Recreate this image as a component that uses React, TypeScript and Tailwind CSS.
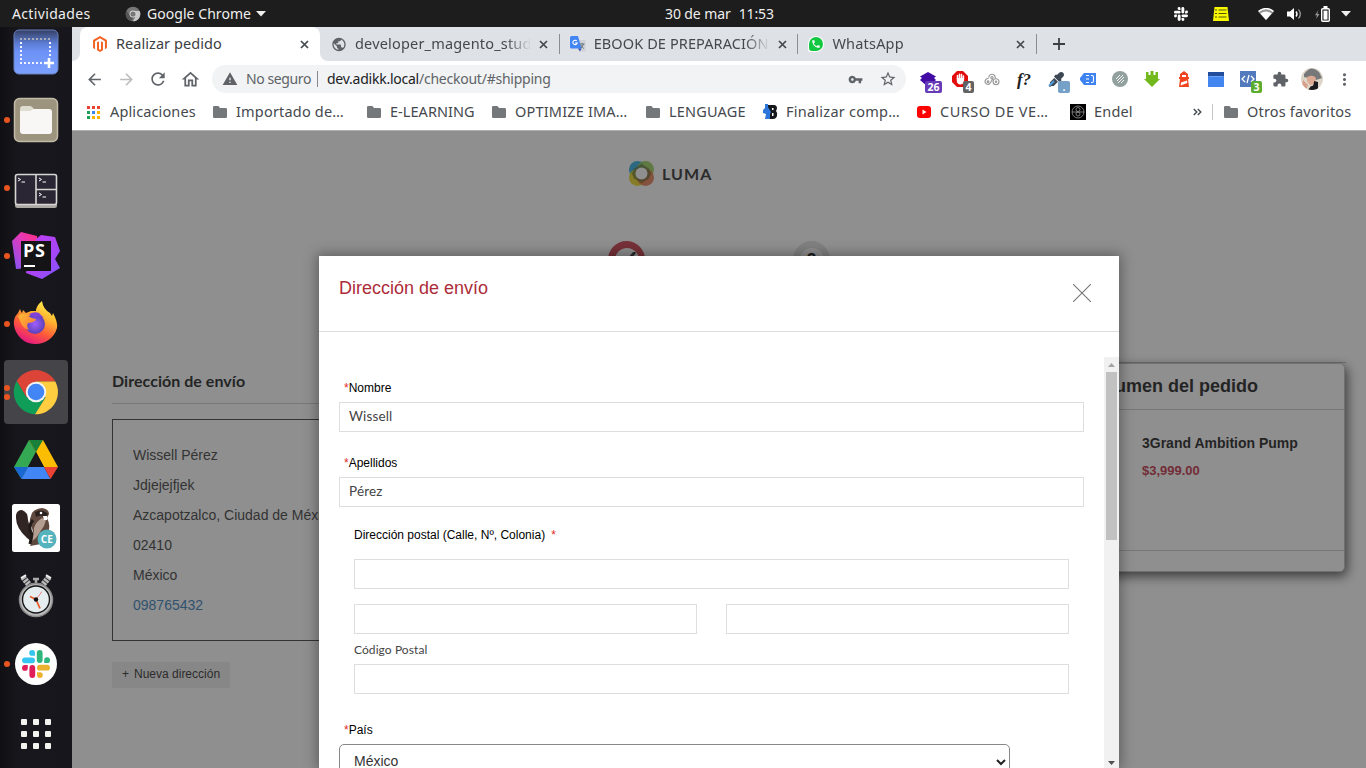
import React from "react";
import type { ReactNode } from "react";
import { FaMagento, FaEyeDropper } from "react-icons/fa";
import { MdArrowBack, MdArrowForward, MdRefresh, MdOutlineHome, MdWarning, MdVpnKey, MdStarBorder, MdPhone, MdPublic, MdMoreVert, MdExtension } from "react-icons/md";

const SLACK_WHITE = ["#fff", "#fff", "#fff", "#fff"];
const SLACK_COLORS = ["#36c5f0", "#2eb67d", "#e01e5a", "#ecb22e"];

function SlackMark({ size, colors }: { size: number; colors: string[] }) {
  const [a, b, c, d] = colors;
  return (
    <svg width={size} height={size} viewBox="0 0 28 28">
      <rect x="0" y="7.4" width="13" height="5.8" rx="2.9" fill={a} />
      <path d="M13 5.8H10.2A2.9 2.9 0 1 1 13 2.9Z" fill={a} />
      <rect x="14.8" y="0" width="5.8" height="13" rx="2.9" fill={b} />
      <path d="M22.2 13V10.2A2.9 2.9 0 1 1 25.1 13Z" fill={b} />
      <rect x="7.4" y="15" width="5.8" height="13" rx="2.9" fill={c} />
      <path d="M5.8 15V17.9A2.9 2.9 0 1 1 2.9 15Z" fill={c} />
      <rect x="15" y="14.8" width="13" height="5.8" rx="2.9" fill={d} />
      <path d="M15 22.2H17.9A2.9 2.9 0 1 1 15 25.1Z" fill={d} />
    </svg>
  );
}

function TopBar() {
  return (
    <header className="flex h-[27px] shrink-0 items-center bg-[#1d1d1d] font-['Noto_Sans',sans-serif] text-[14px] text-[#f0efee]">
      <span className="w-[125px] pl-3 tracking-[0.35px]">Actividades</span>
      <svg width="16" height="16" viewBox="0 0 16 16">
        <circle cx="8" cy="8" r="7.3" fill="#777" />
        <path d="M8 5H14.7A7.3 7.3 0 0 1 8 15.3L11 9.5Z" fill="#c8c8c8" />
        <path d="M1.5 4.6 5.4 10 8 11 6.5 15A7.3 7.3 0 0 1 1.5 4.6Z" fill="#555" />
        <circle cx="8" cy="8" r="3.5" fill="#d8d8d8" />
        <circle cx="8" cy="8" r="2.6" fill="#777" />
      </svg>
      <span className="w-[110px] whitespace-nowrap pl-1.5 tracking-[0.05px]">Google Chrome</span>
      <svg width="10" height="6" viewBox="0 0 10 6" className="ml-[5px]"><path d="M0 0H10L5 5.5Z" fill="#f0efee" /></svg>
      <span className="ml-[399px] flex w-[112px] gap-2 whitespace-nowrap tracking-[-0.1px]"><span>30 de mar</span><span>11:53</span></span>
      <div className="ml-auto flex items-center pr-[15px]">
        <SlackMark size={14} colors={SLACK_WHITE} />
        <svg className="ml-[25px]" width="16" height="14" viewBox="0 0 16 14">
          <path d="M1.5 0h13L16 14H0Z" fill="#f7f700" />
          <path d="M2 3h2M5.500 3h8M2 6.500h2M5.500 6.500h8M2 10h2M5.500 10h8" stroke="#55550a" strokeWidth="1.200" />
        </svg>
        <svg className="ml-[29px]" width="16" height="12" viewBox="0 0 16 12">
          <path d="M0 3.500Q8-3 16 3.500L8 12Z" fill="#999" />
          <path d="M2.300 5.600Q8 1.500 13.700 5.600L8 12Z" fill="#fff" />
          <path d="M.6 3.400Q8-2.300 15.400 3.400" stroke="#fff" strokeWidth="1.400" fill="none" />
        </svg>
        <svg className="ml-[13px]" width="16" height="14" viewBox="0 0 16 14" fill="none" stroke="#fff">
          <path d="M0 4.500h3L7 1v12L3 9.500H0Z" fill="#fff" stroke="none" />
          <path d="M9 4.500q2 2.500 0 5" strokeWidth="1.400" /><path d="M11.500 2.500q3.600 4.500 0 9" stroke="#aaa" strokeWidth="1.200" />
        </svg>
        <svg className="ml-[12px]" width="16" height="16" viewBox="0 0 16 16">
          <path d="M3.500 4 0 9.300h2L1 13l3.500-5H2.300Z" fill="#999" />
          <rect x="6.700" y="2.700" width="7.600" height="12.600" rx="1" fill="none" stroke="#fff" strokeWidth="1.400" />
          <rect x="8.500" y="4.600" width="4" height="9" fill="#fff" /><rect x="8.500" y="0" width="4" height="2.500" fill="#fff" />
        </svg>
        <svg className="ml-[10px]" width="10" height="6" viewBox="0 0 10 6"><path d="M0 0H10L5 5.500Z" fill="#f0efee" /></svg>
      </div>
    </header>
  );
}

function DockItem({ dots = 0, active = false, children }: { dots?: number; active?: boolean; children: ReactNode }) {
  return (
    <div className="flex h-16 shrink-0 items-center">
      <div className={active ? "ml-1 flex h-16 w-16 items-center rounded bg-[#454449]" : "ml-1 flex h-16 w-16 items-center"}>
        <div className="flex w-[6px] flex-col gap-[3px]">
          {Array.from({ length: dots }, (_, i) => <i key={i} className="h-[6px] w-[6px] rounded-full bg-[#e95420]" />)}
        </div>
        <div className="ml-[2px] flex w-12 justify-center">{children}</div>
      </div>
    </div>
  );
}

function Dock() {
  return (
    <nav className="flex w-[72px] shrink-0 flex-col overflow-hidden bg-[linear-gradient(90deg,#101014,#18171d_30%,#17161c)]">
      <div className="-mt-[7px] flex flex-col gap-1">
        <DockItem>
          <svg width="46" height="46" viewBox="0 0 46 46">
            <defs><linearGradient id="shot" x2="0" y2="1"><stop stopColor="#343e62" /><stop offset=".3" stopColor="#5c7cd2" /><stop offset=".5" stopColor="#6e93f8" /><stop offset="1" stopColor="#7ba0ff" /></linearGradient></defs>
            <rect x="1" y="1" width="44" height="44" rx="5" fill="url(#shot)" stroke="#6880c0" />
            <path d="M7 10h31" stroke="#a9adb8" strokeWidth="2" strokeDasharray="2 2" />
            <path d="M8 13v22M7 34h24M37 13v14" stroke="#f2f5ff" strokeWidth="2" strokeDasharray="2 2" />
            <path d="M36 29v10M31 34h10" stroke="#fff" strokeWidth="2.600" />
          </svg>
        </DockItem>
        <DockItem dots={1}>
          <svg width="46" height="46" viewBox="0 0 46 46">
            <rect x="1.500" y="1.500" width="43" height="43" rx="5" fill="#9c947f" stroke="#c1baa7" strokeWidth="1.500" />
            <path d="M7 12q0-3 3-3h7q2 0 4 3h15v18H7Z" fill="#dedbcf" />
            <path d="M7 14h10l4-2h15q3 0 3 3v19q0 3-3 3H10q-3 0-3-3Z" fill="#f8f7f5" />
          </svg>
        </DockItem>
        <DockItem dots={1}>
          <svg width="44" height="36" viewBox="0 0 44 36" className="mt-[5px]">
            <rect x="1" y="1" width="42" height="34" rx="2.500" fill="#aba8a4" />
            <rect x="1.500" y="1.500" width="41" height="30" rx="2" fill="#2b2634" stroke="#d8d6d3" strokeWidth="1.600" />
            <path d="M22 1v30M22 16.500h21" stroke="#d8d6d3" strokeWidth="1.600" />
            <path d="m4 5 2.500 1.500L4 8M7.500 9H11M25 5l2.500 1.500L25 8M28.500 9H32M25 20l2.500 1.500L25 23M28.500 24H32" stroke="#fff" fill="none" />
          </svg>
        </DockItem>
        <DockItem dots={1}>
          <svg width="48" height="48" viewBox="0 0 48 48" className="overflow-visible">
            <defs>
              <linearGradient id="psa" x1="1" x2="0" y2="1"><stop stopColor="#ff3180" /><stop offset=".4" stopColor="#e638b7" /><stop offset="1" stopColor="#7b58fa" /></linearGradient>
              <linearGradient id="psb" x2="1" y2="1"><stop stopColor="#c93df2" /><stop offset=".6" stopColor="#a646f7" /><stop offset="1" stopColor="#7b58ff" /></linearGradient>
            </defs>
            <path d="M0 9 9 0l16 4v10L17 36 4 37Z" fill="url(#psa)" />
            <path d="m24 7 5-4 14 2 5 14-5 8 5 9-18 11-16-6 1-7Z" fill="url(#psb)" />
            <rect x="9" y="9" width="30" height="30" fill="#141416" />
            <text x="11" y="25" fill="#fff" fontFamily="Open Sans, sans-serif" fontWeight="700" fontSize="18" textLength="22">PS</text>
            <path d="M12 34h11" stroke="#fff" strokeWidth="2" />
          </svg>
        </DockItem>
        <DockItem dots={1}>
          <svg width="46" height="46" viewBox="0 0 46 46" className="overflow-visible">
            <defs>
              <linearGradient id="ffa" x1=".8" y1="0" x2=".3" y2="1"><stop stopColor="#fff44f" /><stop offset=".35" stopColor="#ffb52f" /><stop offset=".65" stopColor="#ff5b39" /><stop offset="1" stopColor="#e31587" /></linearGradient>
              <radialGradient id="ffb"><stop stopColor="#9f5fff" /><stop offset="1" stopColor="#5b40b8" /></radialGradient>
              <linearGradient id="ffc" x2="1" y2="1"><stop stopColor="#ffbd35" /><stop offset="1" stopColor="#ff7139" /></linearGradient>
            </defs>
            <path d="M5 12 7 8q1 3 2 4l1-3q2 2 3 3l5-2 5 0q0-5 6-10 1 8 8 12l2 3 1-3q5 9 4 15A22 22 0 0 1 1 24Q0 17 5 12Z" fill="url(#ffa)" />
            <circle cx="22" cy="23" r="10" fill="url(#ffb)" />
            <path d="M5 15q6-4 9-1 3 3 9 4 0 3-8 4-2 3 1 7-7-2-9-9Z" fill="url(#ffc)" />
            <path d="M16 13q6-3 10-1l5 5q-6-3-10-1Z" fill="#8042d8" />
          </svg>
        </DockItem>
        <DockItem dots={2} active>
          <svg width="46" height="46" viewBox="0 0 46 46">
            <path d="M3.700 12A22.300 22.300 0 0 1 42.300 12.500H23L13.500 28.500Z" fill="#db4437" />
            <path d="M3.700 12A22.300 22.300 0 0 0 22 45.300L32.500 28.500H13.500Z" fill="#0f9d58" />
            <path d="M23 12.500h19.300A22.300 22.300 0 0 1 22 45.300l10.500-16.800Z" fill="#ffcd40" />
            <circle cx="23" cy="23" r="10.300" fill="#f3f3f3" /><circle cx="23" cy="23" r="8.300" fill="#4285f4" />
          </svg>
        </DockItem>
        <DockItem>
          <svg width="44" height="40" viewBox="0 0 44 40">
            <path d="m15 0 7 12L7.500 39 0 27Z" fill="#34a853" />
            <path d="M29 0 15 0 22 12 30 27H44Z" fill="#fbbc04" /><path d="M15 0h14l-7 12Z" fill="#188038" />
            <path d="M0 27h14L7.500 39Z" fill="#1967d2" /><path d="M14 27h16l6.500 12h-29Z" fill="#4285f4" /><path d="M30 27h14l-7.500 12Z" fill="#ea4335" />
            <path d="m22 12 8 15H14Z" fill="#17161c" />
          </svg>
        </DockItem>
        <DockItem>
          <svg width="48" height="48" viewBox="0 0 48 48">
            <rect width="48" height="48" rx="2.500" fill="#fff" />
            <path d="M4 11q1-5 6-5 6 2 6 10l3 12q1 6 5 8-4 3-9-2Q4 24 4 14Z" fill="#302522" />
            <path d="M19 12q1-7 11-8 7 1 7 6l-2 4q4 8 1 14l-7 12-11 2 4-10-2-8q-4-6-1-12Z" fill="#5f493e" />
            <path d="M23 8q7-4 13 2l-3 3q-4-3-9 0Z" fill="#29211e" />
            <path d="M30 14l4 2-2 6-8 12-4 3 2-10q-1-7 8-13Z" fill="#b49e91" />
            <path d="M21 16q-6 7-1 14l-2 10" stroke="#211a18" strokeWidth="3" fill="none" />
            <path d="M31 12h4v4h-3Z" fill="#fff" /><circle cx="29" cy="9" r="1.300" fill="#fff" />
            <circle cx="35" cy="35" r="9.500" fill="#54b3bc" />
            <text x="28.800" y="38.800" fill="#fff" fontFamily="Open Sans, sans-serif" fontWeight="700" fontSize="10" textLength="12">CE</text>
          </svg>
        </DockItem>
        <DockItem>
          <svg width="38" height="46" viewBox="0 0 38 46">
            <path d="m6 4 7 9M32 4l-7 9" stroke="#b8b8b8" strokeWidth="6" strokeDasharray="2.500 .8" /><path d="m4 5 5-3M29 2l5 3" stroke="#eee" strokeWidth="2" />
            <path d="M16 6h6M19 5v7" stroke="#aaa" strokeWidth="2.500" />
            <circle cx="19" cy="27" r="16.500" fill="#bbb" stroke="#8a8a8a" strokeWidth="1.500" />
            <circle cx="19" cy="26.500" r="13.500" fill="#e5edef" stroke="#181818" strokeWidth="1.400" />
            <path d="m19 26.500 6-8" stroke="#f08080" /><path d="m19 26.500 4 9M19 26.500l-6-3" stroke="#ed5a2a" strokeWidth="1.800" />
            <circle cx="19" cy="26.500" r="2.200" fill="#111" />
          </svg>
        </DockItem>
        <DockItem dots={1}>
          <div className="flex h-[42px] w-[42px] items-center justify-center rounded-full bg-white"><SlackMark size={28} colors={SLACK_COLORS} /></div>
        </DockItem>
      </div>
      <div className="mt-[23px] ml-[21px] grid w-[30px] grid-cols-3 gap-[6px]">
        {Array.from({ length: 9 }, (_, i) => <i key={i} className="h-[6px] w-[6px] rounded-[1px] bg-[#f3f3ef]" />)}
      </div>
    </nav>
  );
}

function CloseX() {
  return <svg width="9" height="9" viewBox="0 0 9 9" className="shrink-0"><path d="m1 1 7 7M8 1 1 8" stroke="#45494d" strokeWidth="1.700" /></svg>;
}

function TranslateIcon() {
  return (
    <svg width="16" height="16" viewBox="0 0 16 16">
      <path d="M6 4h9.500v11.500H9Z" fill="#cfd2d6" /><path d="M1.500 0H8l3.500 12.500h-10Q0 12.500 0 11V1.500Q0 0 1.500 0Z" fill="#4285f4" /><path d="M8 12.500h3.500L10 15.500Z" fill="#3450c0" />
      <path d="M6.800 5a2.200 2.200 0 1 0 .4 2H5" stroke="#fff" strokeWidth="1.100" fill="none" /><path d="M9.500 8H14.500M12 7v1M13.500 8q-1 3-3 4.500M10.800 9q1 2 3 3.500" stroke="#667481" fill="none" />
    </svg>
  );
}

function WhatsappIcon() {
  return (
    <span className="grid h-4 w-4 place-items-center rounded-[50%_50%_50%_2px] bg-white">
      <span className="grid h-[14px] w-[14px] place-items-center rounded-[50%_50%_50%_3px] bg-[#13c840] text-[10px] text-white"><MdPhone /></span>
    </span>
  );
}

function Tab({ icon, children }: { icon: ReactNode; children: ReactNode }) {
  return (
    <div className="flex h-full w-[238.700px] shrink-0 items-center pl-[10px]">
      <span className="flex w-4 justify-center">{icon}</span>
      <span className="ml-2 w-[176px] overflow-hidden whitespace-nowrap [mask-image:linear-gradient(90deg,#000_86%,transparent)]">{children}</span>
      <span className="ml-[8px]"><CloseX /></span>
      <i className="ml-auto h-5 w-px bg-[#8a8d91]" />
    </div>
  );
}

function TabStrip() {
  return (
    <div className="flex h-[34px] bg-[#dee1e6] text-[14.5px] text-[#45494d]">
      <div className="w-2 bg-white"><div className="h-full rounded-br-lg bg-[#dee1e6]" /></div>
      <div className="flex w-[240px] items-center rounded-t-lg bg-white pl-[12px] text-[#3c4043]">
        <FaMagento className="w-4 text-[16px] text-[#f26322]" />
        <span className="ml-2 w-[184px] whitespace-nowrap tracking-[0.05px]">Realizar pedido</span>
        <CloseX />
      </div>
      <div className="w-2 bg-white"><div className="h-full rounded-bl-lg bg-[#dee1e6]" /></div>
      <div className="-ml-[7px] flex">
        <Tab icon={<MdPublic className="text-[17px] text-[#5f6368]" />}><span className="tracking-[0.18px]">developer_magento_stud</span></Tab>
        <Tab icon={<TranslateIcon />}><span className="tracking-[0.1px]">EBOOK DE PREPARACIÓN</span></Tab>
        <Tab icon={<WhatsappIcon />}><span className="tracking-[0.2px]">WhatsApp</span></Tab>
      </div>
      <svg className="mt-[11px] ml-4" width="12" height="12" viewBox="0 0 12 12"><path d="M6 0v12M0 6h12" stroke="#3c4043" strokeWidth="1.800" /></svg>
    </div>
  );
}

function Ext({ badge, badgeClass = "", children }: { badge?: string; badgeClass?: string; children: ReactNode }) {
  return (
    <span className="relative flex h-8 w-8 shrink-0 items-center justify-center">
      {children}
      {badge && <b className={"absolute right-[2px] bottom-[2px] rounded-[2px] px-[2.500px] text-center text-[10.5px] leading-[12px] text-white " + badgeClass}>{badge}</b>}
    </span>
  );
}

function Toolbar() {
  return (
    <div className="flex h-9 items-center pl-[6px] text-[#5f6368]">
      <Ext><MdArrowBack className="text-[19px]" /></Ext>
      <Ext><MdArrowForward className="text-[19px] text-[#babcbe]" /></Ext>
      <Ext><MdRefresh className="text-[20px]" /></Ext>
      <Ext><MdOutlineHome className="text-[21px]" /></Ext>
      <div className="ml-[6px] flex h-7 w-[694px] items-center rounded-full bg-[#f1f3f4] text-[14px]">
        <MdWarning className="ml-[10px] text-[16px]" />
        <span className="ml-2 w-[71px] pb-[2px] whitespace-nowrap tracking-[-0.4px]">No seguro</span>
        <i className="h-4 w-px bg-[#85888c]" />
        <span className="ml-[9px] flex-1 pb-[2px] whitespace-nowrap tracking-[-0.24px]"><span className="text-[#202124]">dev.adikk.local</span>/checkout/#shipping</span>
        <MdVpnKey className="mr-[16px] text-[15px]" />
        <MdStarBorder className="mr-[9px] text-[18px]" />
      </div>
      <div className="ml-[6px] flex">
        <Ext badge="26" badgeClass="bg-[#673ab7]"><svg width="18" height="15" viewBox="0 0 18 15"><path d="m9 0 8 4.500-2 1.500 2 2L9 15 1 8l2-2-2-1.500Z" fill="#430ca5" /></svg></Ext>
        <Ext badge="4" badgeClass="bg-[#626262]">
          <svg width="16" height="16" viewBox="0 0 16 16"><path d="M5 0h6l5 5v6l-5 5H5l-5-5V5Z" fill="#e40d0d" /><path d="M5.500 8V4.500M7.500 8V3.200M9.500 8V3.500M11.400 8V5" stroke="#fff" strokeWidth="1.500" strokeLinecap="round" /><path d="M4.800 7h7.300v3q-1 3.500-4 3.500-2.500 0-3.300-3Z" fill="#fff" /></svg>
        </Ext>
        <Ext><svg width="16" height="13" viewBox="0 0 18 14" fill="none" stroke="#9a9a9a" strokeWidth="1.300"><path d="M5.300 5A3.700 3.700 0 1 1 12.500 6M5 6A3.200 3.200 0 1 0 7 11" /><circle cx="9" cy="5" r="1.300" /><circle cx="4.500" cy="9.500" r="1" /><circle cx="13.500" cy="9.500" r="3.300" /><circle cx="13.500" cy="9.500" r=".8" /><path d="m7 11 3-5" /></svg></Ext>
        <Ext><span className="font-['Liberation_Serif',serif] text-[17px] leading-none font-bold text-[#222] italic">f?</span></Ext>
        <Ext badge="." badgeClass="bg-[#75a1c9] w-3"><FaEyeDropper className="text-[15px] text-[#3d4854]" /><svg className="absolute bottom-2 left-2" width="8" height="8" viewBox="0 0 8 8"><path d="m1 7 5-5" stroke="#519bd8" strokeWidth="2" /></svg></Ext>
        <Ext><svg width="16" height="12" viewBox="0 0 16 12"><path d="M4 0h12v12H4L0 7V5Z" fill="#3f83f1" /><path d="M6 2.500h3M6 6h3M6 9.500h3M11 2.500h1q1.500 0 1.500 1.500v4q0 1.500-1.500 1.500h-1" stroke="#fff" strokeWidth="1.100" fill="none" /></svg></Ext>
        <Ext><svg width="16" height="16" viewBox="0 0 16 16"><circle cx="8" cy="8" r="8" fill="#93a19e" /><path d="m4 8 4-4M5 10l6-6M6 12l6-6M9 12l3-3" stroke="#fff" strokeWidth=".9" /></svg></Ext>
        <Ext><svg width="16" height="16" viewBox="0 0 16 16"><path d="M2 1h2.500v3h2V0h3v4h2V1H14v7h2l-8 8-8-8h2Z" fill="#71b91c" /></svg></Ext>
        <Ext><svg width="12" height="16" viewBox="0 0 12 16"><path d="m6 0 4 3v3h1v2h-1l1 8H1l1-8H1V6h1V3Z" fill="#f0451e" /><path d="m3 11.500 6-2 .3 2.500-6.600 2.500ZM4 4h4v2H4Z" fill="#fff" /></svg></Ext>
        <Ext><svg width="16" height="15" viewBox="0 0 16 15"><path d="M0 0h16v15H0Z" fill="#4386ef" /><path d="M0 0h16v4H0Z" fill="#214f9d" /><path d="M1 4.500h14" stroke="#6ba2fa" /></svg></Ext>
        <Ext badge="3" badgeClass="bg-[#5cad2e]"><svg width="16" height="16" viewBox="0 0 16 16"><path d="M0 0h16v16H0Z" fill="#527abc" /><path d="m5 5-3 3 3 3M11 5l3 3-3 3M9 4l-2 8" fill="none" stroke="#fff" strokeWidth="1.300" /></svg></Ext>
        <Ext><MdExtension className="text-[17px]" /></Ext>
        <Ext><svg width="22" height="22" viewBox="0 0 22 22"><defs><clipPath id="av"><circle cx="11" cy="11" r="11" /></clipPath></defs><g clipPath="url(#av)"><path d="M0 0h22v22H0Z" fill="#ddd6c8" /><path d="M3 6Q10-4 18 4l3 6-6 2-12-3Z" fill="#77787a" /><path d="M6 9q6-3 9 1l-1 6-5 1-3-4Z" fill="#dca992" /><path d="m13 13 4 1v8H7l3-4q3 1 3-5Z" fill="#1b1a1e" /><path d="m2 12 5 5-2 5H0Z" fill="#d8a08c" /></g></svg></Ext>
        <Ext><MdMoreVert className="text-[19px]" /></Ext>
      </div>
    </div>
  );
}

function Folder() {
  return <svg width="14" height="12" viewBox="0 0 14 12" className="shrink-0"><path d="M0 1.200Q0 0 1.200 0H5.500L7 2H12.800Q14 2 14 3.200V10.800Q14 12 12.800 12H1.200Q0 12 0 10.800Z" fill="#74787b" /></svg>;
}

function Bookmarks() {
  const apps = ["#ea4335", "#ea4335", "#ea4335", "#1e9e57", "#3b83f0", "#fbb300", "#1e9e57", "#fbb300", "#fbb300"];
  return (
    <div className="flex h-[34px] items-center border-b border-[#b0b0b2] pb-[3px] pl-[15px] text-[14.5px] tracking-[0.18px] whitespace-nowrap text-[#45494d]">
      <span className="grid grid-cols-3 gap-[2px]">{apps.map((c, i) => <i key={i} className="h-[3px] w-[3px]" style={{ background: c }} />)}</span>
      <span className="ml-[10px] w-[103px] tracking-[0.12px]">Aplicaciones</span>
      <Folder /><span className="ml-[9px] w-[131px]">Importado de…</span>
      <Folder /><span className="ml-[9px] w-[102px] tracking-[0.05px]">E-LEARNING</span>
      <Folder /><span className="ml-[9px] w-[131px]">OPTIMIZE IMA…</span>
      <Folder /><span className="ml-[9px] w-[93px]">LENGUAGE</span>
      <svg width="16" height="16" viewBox="0 0 16 16" className="shrink-0"><path d="M6 1h6q3 0 3 3.500L14 7q2 2 1 5-1 3-4 3H5Z" fill="#15171b" /><path d="M10 4h1.500v2H10ZM10 9h1.500v3H10Z" fill="#fff" /><path d="M3 0h3v3l3 5-1 2v5H3l1-5-3-1V6l2-2Z" fill="#2d76da" /></svg>
      <span className="ml-2 w-[131px] tracking-[0.25px]">Finalizar comp…</span>
      <svg width="14" height="12" viewBox="0 0 14 12" className="shrink-0"><rect width="14" height="12" rx="3" fill="#f00" /><path d="m5.500 3.500 4 2.500-4 2.500Z" fill="#fff" /></svg>
      <span className="ml-[9px] w-[130px] tracking-[0.5px]">CURSO DE VE…</span>
      <svg width="16" height="16" viewBox="0 0 16 16" className="shrink-0"><path d="M0 0h16v16H0Z" fill="#000" /><g fill="none" stroke="#999" strokeWidth=".8"><circle cx="8" cy="8" r="6" /><circle cx="8" cy="5.500" r="2" /><circle cx="8" cy="10" r="2" /><path d="M2 8h12" /></g></svg>
      <span className="ml-2">Endel</span>
      <svg className="ml-auto" width="9" height="8" viewBox="0 0 9 8"><path d="m.8 1 3 3-3 3M4.800 1l3 3-3 3" fill="none" stroke="#45494d" strokeWidth="1.400" /></svg>
      <i className="mr-[11px] ml-[10px] h-[16px] w-px bg-[#c5c7ca]" />
      <Folder /><span className="ml-[9px] w-[119px]">Otros favoritos</span>
    </div>
  );
}

function LumaLogo() {
  return (
    <div className="mx-auto flex w-[83px] items-center">
      <svg width="25" height="25" viewBox="0 0 25 25" className="shrink-0">
        <circle cx="8.500" cy="8.500" r="8.500" fill="#27a9e1" /><circle cx="16.500" cy="8.500" r="8.500" fill="#8dc63f" fillOpacity=".9" />
        <circle cx="8.500" cy="16.500" r="8.500" fill="#e8d000" fillOpacity=".9" /><circle cx="16.500" cy="16.500" r="8.500" fill="#e2622e" fillOpacity=".85" />
        <path d="m12.500 3 4 2.500 3.500 2 2 5-2 5-3.500 2-4 2.500-4-2.500-3.500-2-2-5 2-5 3.500-2Z" fill="#4b5a2a" fillOpacity=".65" />
        <circle cx="12.500" cy="12.500" r="6" fill="#fff" />
      </svg>
      <span className="ml-2 font-['Lato',sans-serif] text-[16px] leading-[25px] font-bold tracking-[1.1px] text-[#222]">LUMA</span>
    </div>
  );
}

function CheckoutPage() {
  const address = ["Wissell Pérez", "Jdjejejfjek", "Azcapotzalco, Ciudad de México", "02410", "México"];
  return (
    <div className="flex h-full flex-col bg-white pt-[30px] font-['Liberation_Sans',Arial,sans-serif] text-[14px] text-[#333]">
      <div className="flex pl-[557px]"><LumaLogo /><span className="flex-1" /></div>
      <div className="flex gap-[148px] pt-[55px] pl-[536px]">
        <div className="grid h-[37px] w-[37px] place-items-center rounded-full bg-[#c9303f]"><div className="grid h-6 w-6 place-items-center rounded-full bg-white"><svg width="18" height="16" viewBox="0 0 18 16"><path d="m1 8 5 5L17 0" fill="none" stroke="#222" strokeWidth="3" /></svg></div></div>
        <div className="grid h-[37px] w-[37px] place-items-center rounded-full bg-[#e0e0e0]"><b className="grid h-6 w-6 place-items-center rounded-full bg-white text-[18px] leading-none text-black">2</b></div>
      </div>
      <div className="mt-[83px] flex justify-between pr-[20px] pl-10">
        <section className="w-[740px]">
          <h2 className="mt-[7px] h-[36px] border-b border-[#ccc] pt-px font-['Lato',sans-serif] text-[16px] leading-6 font-bold tracking-[0.04px] text-[#111]">Dirección de envío</h2>
          <div className="mt-[15px] h-[222px] w-[340px] border border-[#333] px-5 pt-5 leading-[30px]">
            {address.map((line) => <p key={line} className="whitespace-nowrap">{line}</p>)}
            <a className="text-[#2f78b5]">098765432</a>
          </div>
          <button className="mt-[21px] flex h-[26px] w-[118px] items-center bg-[#eee] pb-[2px] pl-[10px] text-[12px] text-[#222]">+<span className="ml-[5px]">Nueva dirección</span></button>
        </section>
        <aside className="w-[420px]">
          <div className="mt-px h-px bg-[#bbb]" />
          <div className="h-[209px] w-[419px] rounded-[5px] border border-[#bbb] bg-white shadow-[2px_4px_12px_0px_rgba(0,0,0,0.75)]">
            <h3 className="h-[46px] border-b border-[#ccc] pr-[86px] text-right text-[18px] leading-[44px] font-bold text-[#111]">Resumen del pedido</h3>
            <div className="h-[141px] border-b border-[#ccc] pt-[23px] pl-[215px] font-bold">
              <p className="leading-5 text-[#111]">3Grand Ambition Pump</p>
              <p className="mt-[8px] text-[13px] leading-5 text-[#bf263d]">$3,999.00</p>
            </div>
          </div>
        </aside>
      </div>
    </div>
  );
}

function Input({ value = "", className = "w-full" }: { value?: string; className?: string }) {
  return <div className={"flex h-[30px] items-center border border-[#dedede] pb-px pl-[9px] font-['Lato',sans-serif] text-[13.5px] tracking-[0.15px] text-[#444] " + className}>{value}</div>;
}

function Label({ children }: { children: ReactNode }) {
  return <div className="pl-[5px] leading-[15px] text-black"><span className="text-[#e02b27]">*</span>{children}</div>;
}

function AddressModal() {
  return (
    <section className="flex h-full w-[800px] flex-col bg-white font-['Liberation_Sans',Arial,sans-serif] text-[12px] shadow-[0_0_12px_2px_rgba(0,0,0,0.35)]">
      <header className="flex h-[76px] shrink-0 justify-between border-b border-[#dedede] pt-[20px] pr-[28px] pl-5">
        <h1 className="text-[18px] leading-6 text-[#ad2c3a]">Dirección de envío</h1>
        <svg className="mt-[8px]" width="18" height="18" viewBox="0 0 18 18"><path d="m0 0 18 18M18 0 0 18" stroke="#777" strokeWidth="1.100" /></svg>
      </header>
      <div className="mt-[25px] flex min-h-0 flex-1">
        <form className="w-[785px] overflow-hidden pt-6 pr-5 pl-5">
          <Label>Nombre</Label>
          <div className="mt-[6px]"><Input value="Wissell" /></div>
          <div className="mt-6"><Label>Apellidos</Label></div>
          <div className="mt-[6px]"><Input value="Pérez" /></div>
          <div className="px-[15px] pt-[21px]">
            <div className="leading-[15px] text-black">Dirección postal (Calle, Nº, Colonia)<span className="ml-[6px] text-[#e02b27]">*</span></div>
            <div className="mt-4"><Input /></div>
            <div className="mt-[15px] flex justify-between"><Input className="w-[343px]" /><Input className="w-[343px]" /></div>
            <div className="mt-[8px] font-['Lato',sans-serif] text-[12px] leading-[15px] tracking-[0.08px] text-[#444]">Código Postal</div>
            <div className="mt-[7px]"><Input /></div>
          </div>
          <div className="mt-[29px]"><Label>País</Label></div>
          <div className="mt-[6px] flex h-[36px] w-[671px] items-center justify-between rounded-[5px] border border-[#888] pr-[3px] pb-[2px] pl-[14px] text-[14px] text-[#333]">México
            <svg width="10" height="7" viewBox="0 0 10 7" className="mt-[2px]"><path d="m1 1 4 4 4-4" fill="none" stroke="#222" strokeWidth="2" /></svg>
          </div>
        </form>
        <div className="flex w-[15px] flex-col items-center bg-[#f1f1f1]">
          <svg className="mt-[6px] shrink-0" width="7" height="4" viewBox="0 0 7 4"><path d="M0 4 3.500 0 7 4Z" fill="#a3a3a3" /></svg>
          <div className="mt-[5px] h-[168px] w-[11px] bg-[#c1c1c1]" />
          <svg className="mt-auto mb-[3px]" width="7" height="4" viewBox="0 0 7 4"><path d="M0 0h7L3.500 4Z" fill="#505050" /></svg>
        </div>
      </div>
    </section>
  );
}

export default function App() {
  return (
    <div className="flex h-screen w-screen flex-col overflow-hidden">
      <TopBar />
      <div className="flex min-h-0 flex-1">
        <Dock />
        <main className="flex min-w-0 flex-1 flex-col bg-white">
          <div className="shrink-0 font-['Noto_Sans',sans-serif]"><TabStrip /><Toolbar /><Bookmarks /></div>
          <div className="relative min-h-0 flex-1 overflow-hidden">
            <CheckoutPage />
            <div className="absolute inset-0 flex bg-[rgba(51,51,51,0.55)] pt-[125px] pl-[247px]"><AddressModal /></div>
          </div>
        </main>
      </div>
    </div>
  );
}
